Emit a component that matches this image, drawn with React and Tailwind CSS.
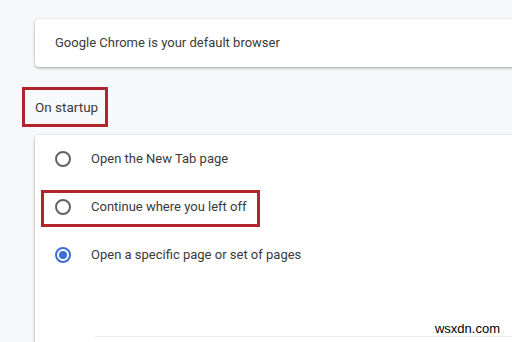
import React from 'react';

const options = [
    { label: 'Open the New Tab page', checked: false },
    { label: 'Continue where you left off', checked: false, marked: true },
    { label: 'Open a specific page or set of pages', checked: true },
];

const Radio = ({ checked }) => (
    checked ? (
        <span className="w-4 h-4 rounded-full border-2 border-[#3b6fd6] flex items-center justify-center shrink-0">
            <span className="w-2 h-2 rounded-full bg-[#3b6fd6]" />
        </span>
    ) : (
        <span className="w-4 h-4 rounded-full border-2 border-[#5f6368] shrink-0" />
    )
);

const App = () => {
    return (
        <div className="w-[512px] h-[342px] overflow-hidden bg-[#f8f9fa] pt-[19px] pl-[35px] text-[13px] text-[#3a3a3a] font-['Roboto',sans-serif] relative">
            <div className="h-[48px] -mr-4 bg-white rounded shadow-[0_1px_2px_rgba(60,64,67,0.3),0_1px_3px_1px_rgba(60,64,67,0.15)] flex items-center pl-5">
                Google Chrome is your default browser
            </div>

            <div className="mt-[20px] -ml-[13px] w-[86px] h-[40px] border-[3px] border-[#b3242b] flex items-center pl-[10px] text-[13.5px]">
                On startup
            </div>

            <div className="mt-[8px] -mr-4 h-[220px] bg-white rounded-t shadow-[0_1px_2px_rgba(60,64,67,0.3),0_1px_3px_1px_rgba(60,64,67,0.15)]">
                {options.map((opt) => (
                    <div key={opt.label} className="relative h-[48px] flex items-center pl-5 gap-5">
                        <Radio checked={opt.checked} />
                        <span>{opt.label}</span>
                        {opt.marked && (
                            <div className="absolute left-[6px] top-[7px] w-[219px] h-[37px] border-[3px] border-[#b3242b]" />
                        )}
                    </div>
                ))}
                <div className="mt-[57px] ml-[60px] border-t border-[#ececec]" />
            </div>

            <span className="absolute right-[12px] bottom-[4px] text-[13px] text-black font-['Liberation_Sans',sans-serif]">
                wsxdn.com
            </span>
        </div>
    );
};

export default App;
